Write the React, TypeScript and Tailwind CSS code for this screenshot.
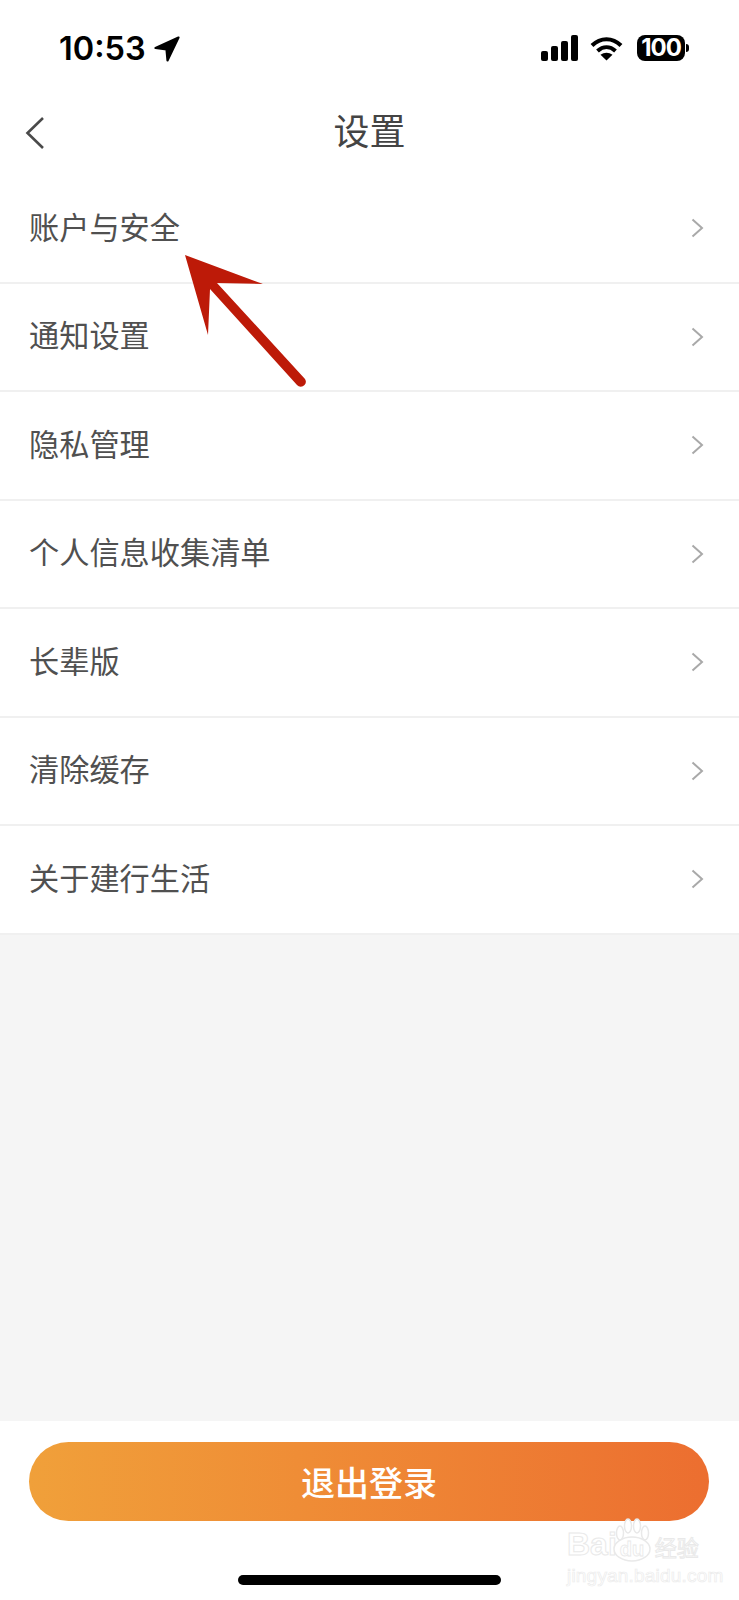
const rows = ["账户与安全", "通知设置", "隐私管理", "个人信息收集清单", "长辈版", "清除缓存", "关于建行生活"];

function StatusBar() {
  return (
    <div className="flex h-[92px] items-start justify-between pl-[59px] pr-[50px] pt-[33px] text-black">
      <div className="flex items-center gap-[8px]">
        <span className="font-['Inter',sans-serif] text-[32.5px] leading-[32px] font-semibold">10:53</span>
        <svg width="26" height="26" viewBox="0 0 26 26" fill="black">
          <path d="M24.5 1.5 L1.5 12 L12.5 13.5 L13.5 24.5 Z" stroke="black" strokeWidth="2.2" strokeLinejoin="round" />
        </svg>
      </div>
      <div className="flex items-center pt-[2px]">
        <svg width="37" height="26" viewBox="0 0 37 26" fill="black">
          <rect x="0" y="16" width="7" height="10" rx="2" />
          <rect x="10" y="11" width="7" height="15" rx="2" />
          <rect x="20" y="6" width="7" height="20" rx="2" />
          <rect x="30" y="0" width="7" height="26" rx="2" />
        </svg>
        <svg className="ml-[12px]" width="33" height="25" viewBox="0 0 33 25" fill="none" stroke="black" strokeWidth="4">
          <path d="M2 9.5 C10.5 1 22.5 1 31 9.5" />
          <path d="M7.5 15 C13 10 20 10 25.5 15" />
          <path d="M16.5 24.5 L10.5 18.8 C14 16 19 16 22.5 18.8 Z" fill="black" stroke="none" />
        </svg>
        <div className="ml-[14px] flex items-center">
          <div className="flex h-[26px] w-[48px] items-center justify-center rounded-[8px] bg-black font-['Inter',sans-serif] text-[24px] leading-none font-bold tracking-[-1px] text-white">
            100
          </div>
          <div className="ml-px h-[8px] w-[3px] rounded-r-full bg-black" />
        </div>
      </div>
    </div>
  );
}

function Row({ label }: { label: string }) {
  return (
    <div className="flex h-[108.5px] items-center justify-between border-b-2 border-[#f0f0f0] pl-[29px] pr-[35px]">
      <span className="mb-[5px] text-[30.2px] leading-none text-[#505050]">{label}</span>
      <svg width="13" height="20" viewBox="0 0 13 20" fill="none" stroke="#a9a9a9" strokeWidth="2">
        <path d="M1.5 1.5 L11 10 L1.5 18.5" />
      </svg>
    </div>
  );
}

function Arrow() {
  return (
    <svg className="absolute top-[250px] left-[180px]" width="130" height="145" viewBox="0 0 130 145">
      <path d="M5 5 L83 34 L37 33 L125 129 A5 5 0 0 1 124.500 135 A5 5 0 0 1 117 135 L30 39 L28 85 Z" fill="#bd1a08" />
    </svg>
  );
}

function Watermark() {
  return (
    <div className="absolute top-[1518px] left-[567px] flex w-[145px] flex-col items-start">
      <div className="flex items-end font-['Liberation_Sans',sans-serif] text-[32px] leading-[34px] font-bold [-webkit-text-stroke:1px_#e9e9e9] text-white">
        <span>Bai</span>
        <svg className="-ml-[5px] -mb-[1px]" width="40" height="44" viewBox="0 0 40 44" fill="white" stroke="#e9e9e9" strokeWidth="1.5">
          <ellipse cx="20" cy="31" rx="18" ry="12" />
          <ellipse cx="8" cy="15" rx="3.500" ry="7" />
          <ellipse cx="16" cy="8" rx="3.500" ry="7" />
          <ellipse cx="25" cy="8" rx="3.500" ry="7" />
          <ellipse cx="33" cy="15" rx="3.500" ry="7" />
          <text x="20" y="38" textAnchor="middle" fontSize="20" fontWeight="700" strokeWidth="0.8">du</text>
        </svg>
        <span className="ml-[3px] font-['Noto_Sans_CJK_SC',sans-serif] text-[22px] leading-[30px] font-normal">经验</span>
      </div>
      <span className="mt-[4px] font-['Liberation_Sans',sans-serif] text-[19px] leading-[22px] tracking-[0.2px] text-white [-webkit-text-stroke:0.7px_#ececec]">jingyan.baidu.com</span>
    </div>
  );
}

export default function App() {
  return (
    <div className="relative flex h-[1600px] w-[739px] flex-col overflow-hidden bg-[#f5f5f5] font-['Noto_Sans_CJK_SC',sans-serif]">
      <div className="bg-white">
        <StatusBar />
        <div className="relative flex h-[83px] items-start justify-center pt-[17px]">
          <svg className="absolute top-[24px] left-[25px]" width="20" height="34" viewBox="0 0 20 34" fill="none" stroke="#4a4a4a" strokeWidth="2.6">
            <path d="M18 2 L2.500 17 L18 32" />
          </svg>
          <span className="text-[36px] leading-[40px] text-[#444444]">设置</span>
        </div>
        {rows.map((label) => (
          <Row key={label} label={label} />
        ))}
      </div>
      <div className="flex-1" />
      <div className="flex h-[179px] flex-col items-center bg-white pl-[29px] pr-[30px] pt-[21px]">
        <button className="flex h-[79px] w-full items-center justify-center rounded-full bg-gradient-to-r from-[#f0a03a] to-[#ec6e30] text-[34px] font-medium text-white">
          退出登录
        </button>
        <div className="mt-[54px] h-[10px] w-[263px] rounded-full bg-black" />
      </div>
      <Arrow />
      <Watermark />
    </div>
  );
}
